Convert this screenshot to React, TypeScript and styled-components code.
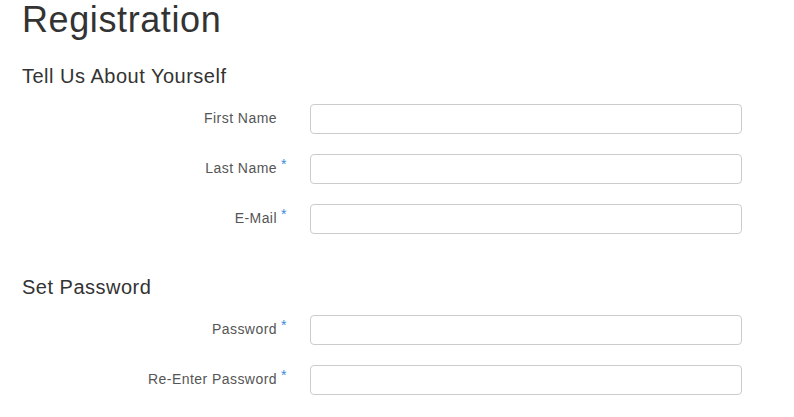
import React from "react";
import styled, { createGlobalStyle } from "styled-components";

const GlobalStyle = createGlobalStyle`
  html, body {
    margin: 0;
    padding: 0;
    background: #ffffff;
  }
  body {
    font-family: "Liberation Sans", Arial, Helvetica, sans-serif;
    color: #333333;
    font-size: 14px;
  }
  * { box-sizing: border-box; }
`;

const Page = styled.main`
  padding: 0 22px;
`;

const Title = styled.h1`
  margin: 0;
  font-size: 36px;
  font-weight: 400;
  line-height: 39.6px;
  letter-spacing: 0.6px;
  color: #333333;
`;

const Section = styled.section`
  display: flex;
  flex-direction: column;
  margin-top: 25px;
  & + & {
    margin-top: 42px;
  }
`;

const SectionTitle = styled.h3`
  margin: 0 0 17px;
  font-size: 20px;
  font-weight: 400;
  line-height: 22px;
  letter-spacing: 0.5px;
  color: #333333;
`;

const Fields = styled.div`
  display: grid;
  row-gap: 20px;
`;

const Row = styled.div`
  display: grid;
  grid-template-columns: 255px 33px 432px;
  align-items: start;
`;

const Label = styled.label`
  padding-top: 4px;
  text-align: right;
  font-size: 14px;
  line-height: 20px;
  letter-spacing: 0.45px;
  color: #555555;
`;

const Star = styled.span`
  padding-left: 4px;
  font-size: 14px;
  line-height: 20px;
  color: #3a8ad8;
`;

const Input = styled.input`
  height: 30px;
  width: 432px;
  margin: 0;
  padding: 5px 10px;
  border: 1px solid #cccccc;
  border-radius: 4px;
  background: #ffffff;
  font-family: inherit;
  font-size: 14px;
  color: #555555;
  outline: none;
`;

type Field = { id: string; label: string; required?: boolean; type?: string };

const about: Field[] = [
  { id: "first", label: "First Name" },
  { id: "last", label: "Last Name", required: true },
  { id: "email", label: "E-Mail", required: true, type: "email" },
];

const password: Field[] = [
  { id: "pw", label: "Password", required: true, type: "password" },
  { id: "pw2", label: "Re-Enter Password", required: true, type: "password" },
];

function FieldRow({ field }: { field: Field }) {
  return (
    <Row>
      <Label htmlFor={field.id}>{field.label}</Label>
      <Star>{field.required ? "*" : ""}</Star>
      <Input id={field.id} type={field.type ?? "text"} />
    </Row>
  );
}

export default function App() {
  return (
    <>
      <GlobalStyle />
      <Page>
        <Title>Registration</Title>
        <Section>
          <SectionTitle>Tell Us About Yourself</SectionTitle>
          <Fields>
            {about.map((f) => (
              <FieldRow key={f.id} field={f} />
            ))}
          </Fields>
        </Section>
        <Section>
          <SectionTitle>Set Password</SectionTitle>
          <Fields>
            {password.map((f) => (
              <FieldRow key={f.id} field={f} />
            ))}
          </Fields>
        </Section>
      </Page>
    </>
  );
}
